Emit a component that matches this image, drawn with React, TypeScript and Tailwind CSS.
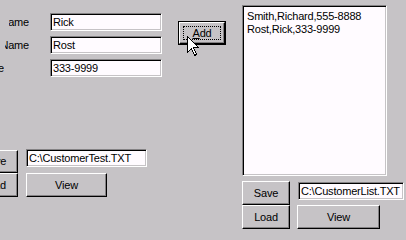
import React from "react";

const sunken =
  "border border-t-[#848284] border-l-[#848284] border-r-white border-b-white shadow-[inset_1px_1px_0_#000,inset_-1px_-1px_0_#c6c3c6] bg-[#fffbff]";
const raised =
  "border border-t-white border-l-white border-r-black border-b-black shadow-[inset_-1px_-1px_0_#848284] bg-[#c6c3c6] flex items-center justify-center";

function Field({ value, className }: { value: string; className: string }) {
  return (
    <div className={`${sunken} ${className} flex items-center pl-[2px] whitespace-nowrap overflow-hidden`}>
      {value}
    </div>
  );
}

function Btn({ label, className }: { label: React.ReactNode; className: string }) {
  return <div className={`${raised} ${className}`}>{label}</div>;
}

const rows: { label: string; value: string; box: string }[] = [
  { label: "First Name", value: "Rick", box: "ml-[9px] w-[20px]" },
  { label: "Last Name", value: "Rost", box: "ml-[5px] w-[24px]" },
  { label: "Phone", value: "333-9999", box: "ml-[0px] w-[4px]" },
];

export default function App() {
  return (
    <div className="relative w-[406px] h-[240px] overflow-hidden bg-[#c6c3c6] font-['Liberation_Sans',Arial,sans-serif] text-[11px] leading-[13px] tracking-[-0.2px] text-black flex">
      {/* Left column */}
      <div className="w-[242px] shrink-0 flex flex-col">
        <div className="flex h-[77px]">
          <div className="flex flex-col pt-[13px] gap-[5px]">
            {rows.map((r) => (
              <div key={r.label} className="flex items-center h-[18px]">
                <div className="w-[50px] shrink-0 flex">
                  <div className={`${r.box} flex justify-end overflow-hidden`}>
                    <span className="shrink-0 whitespace-nowrap">{r.label}</span>
                  </div>
                </div>
                <Field value={r.value} className="w-[112px] h-[18px]" />
              </div>
            ))}
          </div>
          <div className="ml-[16px] mt-[21px] w-[48px] h-[24px] border border-black flex">
            <div className={`${raised} relative flex-1`}>
              <div className="absolute left-[3px] top-[3px] right-[3px] bottom-[3px] border border-dotted border-black" />
              <span>
                <span className="underline underline-offset-[1px]">A</span>dd
              </span>
            </div>
          </div>
        </div>
        <div className="flex mt-[72px]">
          <div className="flex flex-col ml-[-30px] w-[48px] shrink-0">
            <Btn label="Save" className="mt-[1px] h-[23px]" />
            <Btn label="Load" className="h-[24px]" />
          </div>
          <div className="flex flex-col ml-[8px]">
            <Field value="C:\CustomerTest.TXT" className="w-[121px] h-[18px] pl-[2px]" />
            <Btn label="View" className="mt-[6px] w-[81px] h-[24px]" />
          </div>
        </div>
      </div>

      {/* Right column */}
      <div className="flex flex-col">
        <div className={`${sunken} mt-[5px] w-[145px] h-[171px] pl-[4px] pt-[4px] whitespace-nowrap`}>
          <div>Smith,Richard,555-8888</div>
          <div>Rost,Rick,333-9999</div>
        </div>
        <div className="flex mt-[5px]">
          <div className="flex flex-col w-[48px] shrink-0">
            <Btn label="Save" className="h-[24px]" />
            <Btn label="Load" className="h-[24px]" />
          </div>
          <div className="flex flex-col ml-[7px]">
            <Field value="C:\CustomerList.TXT" className="ml-[1px] mt-[1px] w-[106px] h-[18px]" />
            <Btn label="View" className="mt-[5px] w-[83px] h-[24px]" />
          </div>
        </div>
      </div>

      {/* Mouse cursor */}
      <svg
        className="absolute left-[187px] top-[36px]"
        width="13"
        height="21"
        viewBox="0 0 13 21"
        shapeRendering="crispEdges"
      >
        <path
          d="M0.5 0.5 L0.5 16.5 L4.5 12.5 L7.5 19.5 L9.5 18.5 L6.5 11.5 L11.5 11.5 Z"
          fill="#fff"
          stroke="#000"
          strokeWidth="1"
          strokeLinejoin="miter"
        />
      </svg>
    </div>
  );
}
